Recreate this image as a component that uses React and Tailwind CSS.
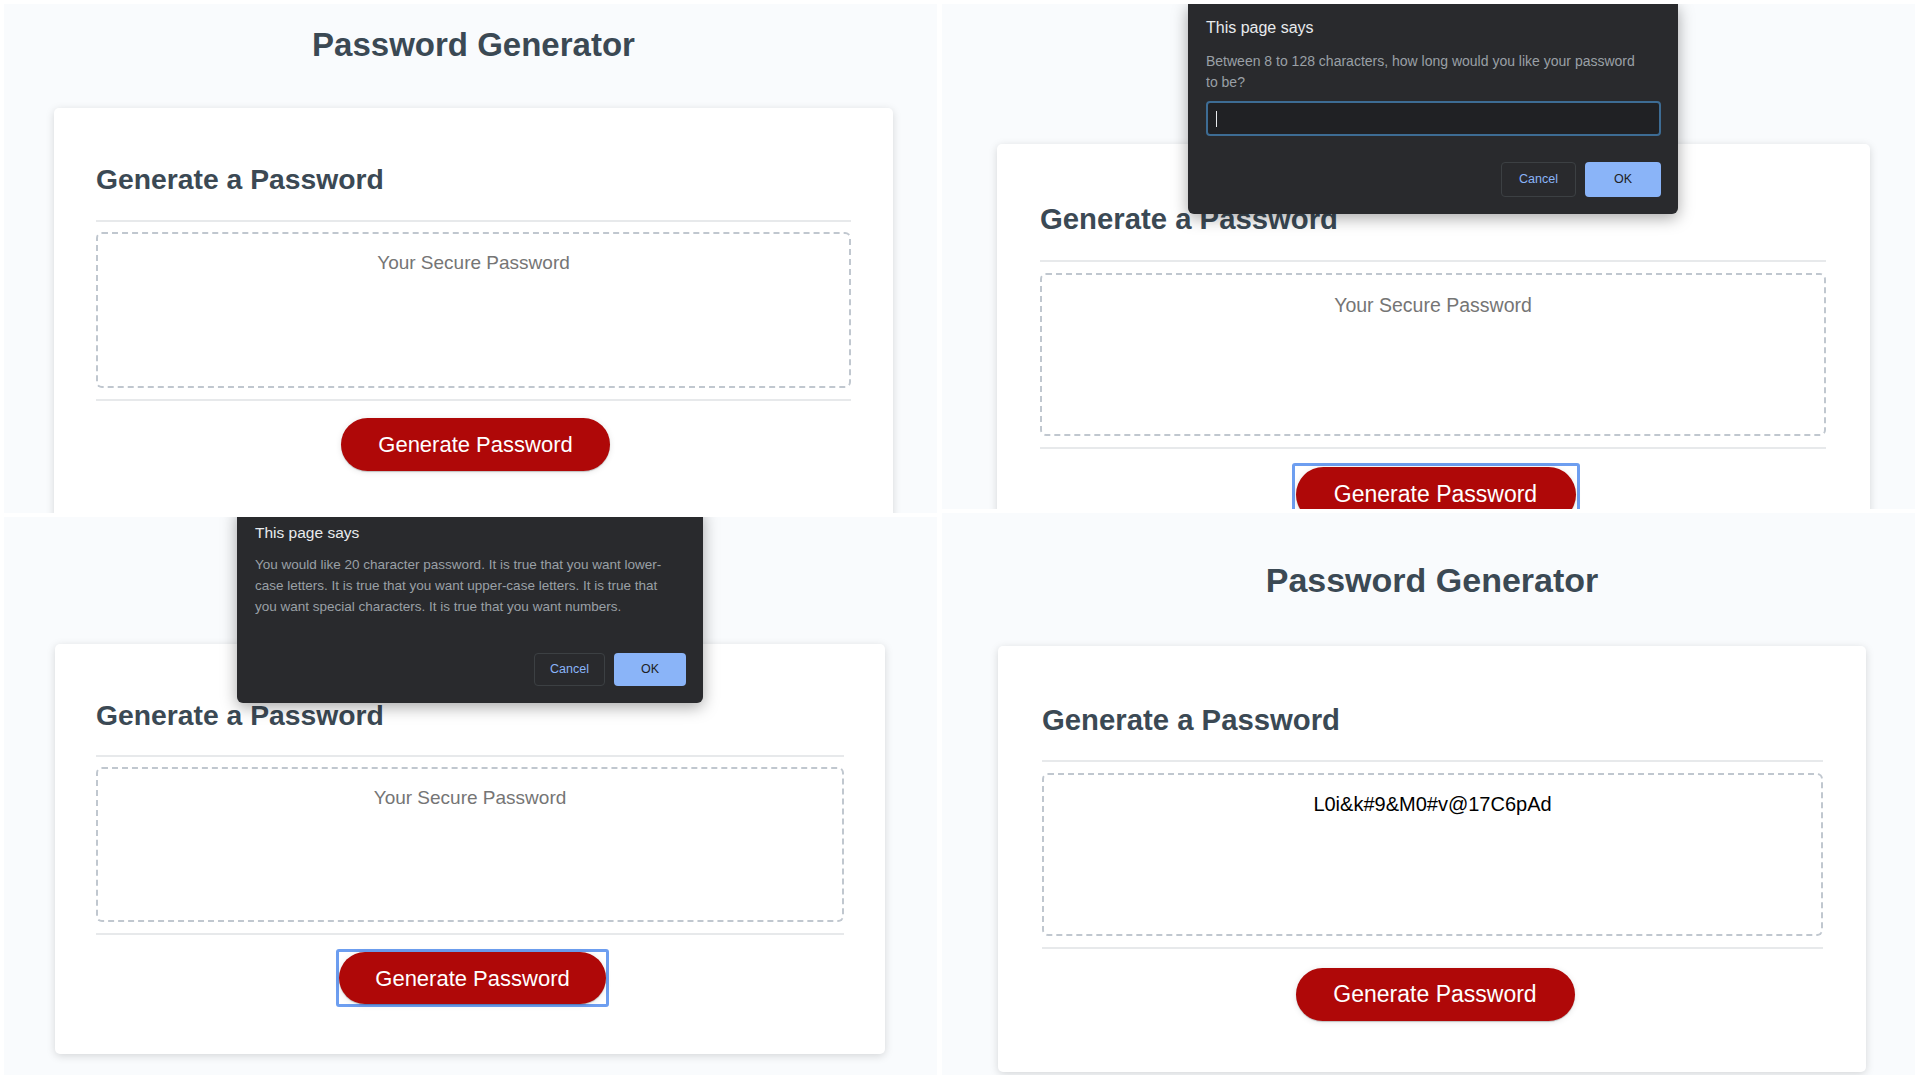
import React from "react";

const FONT = "font-['Liberation_Sans',Arial,Helvetica,sans-serif]";

function Line({ cls }) {
  return <div className={`h-[2px] w-full bg-[#e7e9eb] ${cls}`} />;
}

function GenBtn({ cls }) {
  return (
    <button
      className={`bg-[#af0808] text-white rounded-full shadow-[0_1px_6px_rgba(0,0,0,0.1),0_1px_1px_rgba(0,0,0,0.2)] flex items-center justify-center whitespace-nowrap ${cls}`}
    >
      Generate Password
    </button>
  );
}

function Card({ cardCls, h2Cls, line1Cls, taCls, line2Cls, btnWrapCls, btn, children }) {
  return (
    <div className={`bg-white rounded-[5px] shadow-[0_2px_8px_rgba(0,0,0,0.15)] text-[#3b4954] ${cardCls}`}>
      <h2 className={`font-bold whitespace-nowrap ${h2Cls}`}>Generate a Password</h2>
      <Line cls={line1Cls} />
      <div className={`border-2 border-dashed border-[#c0c7cf] rounded-[6px] text-center ${taCls}`}>{children}</div>
      <Line cls={line2Cls} />
      <div className={`flex justify-center ${btnWrapCls}`}>{btn}</div>
    </div>
  );
}

function DialogButtons({ cancelCls, okCls, rowCls }) {
  return (
    <div className={`flex justify-end gap-[9px] ${rowCls}`}>
      <div className={`border border-[#3c4043] rounded-[4px] text-[#8ab4f8] text-[12.5px] flex items-center justify-center ${cancelCls}`}>
        Cancel
      </div>
      <div className={`bg-[#8ab4f8] rounded-[4px] text-[#202124] text-[12.5px] flex items-center justify-center ${okCls}`}>
        OK
      </div>
    </div>
  );
}

export default function App() {
  return (
    <div className={`w-[1920px] h-[1080px] bg-white flex gap-[5px] pt-[4px] pl-[4px] overflow-hidden ${FONT}`}>
      {/* Left column */}
      <div className="flex flex-col gap-[4px] w-[933px]">
        {/* Top-left */}
        <div className="relative overflow-hidden bg-[#f9fbfd] h-[509px]">
          <div className="ml-[50px] w-[839px] pt-[21px]">
            <h1 className="text-center font-bold text-[33px] leading-[40px] text-[#3b4954]">Password Generator</h1>
            <Card
              cardCls="mt-[43px] pt-[54px] pl-[42px] pr-[42px] pb-[48px]"
              h2Cls="text-[28.3px] leading-[34px]"
              line1Cls="mt-[24px]"
              taCls="mt-[10px] h-[156px] pt-[17px]"
              line2Cls="mt-[11px]"
              btnWrapCls="mt-[17px]"
              btn={<GenBtn cls="ml-[4px] w-[269px] h-[53px] text-[22px]" />}
            >
              <div className="text-[19px] leading-[23px] text-[#757575]">Your Secure Password</div>
            </Card>
          </div>
        </div>

        {/* Bottom-left */}
        <div className="relative overflow-hidden bg-[#f9fbfd] h-[558px]">
          <div className="ml-[51px] w-[830px] pt-[21px]">
            <div className="h-[40px]" />
            <Card
              cardCls="mt-[66px] pt-[54px] pl-[41px] pr-[41px] pb-[47px]"
              h2Cls="text-[28.3px] leading-[34px]"
              line1Cls="mt-[23px]"
              taCls="mt-[10px] h-[155px] pt-[17px]"
              line2Cls="mt-[11px]"
              btnWrapCls="mt-[14px]"
              btn={
                <div className="ml-[5px] border-[3px] border-[#6d9ef0] rounded-[3px]">
                  <GenBtn cls="w-[267px] h-[52px] text-[22px]" />
                </div>
              }
            >
              <div className="text-[19px] leading-[23px] text-[#757575]">Your Secure Password</div>
            </Card>
          </div>

          {/* Alert dialog */}
          <div className="absolute left-[233px] top-[-8px] w-[466px] bg-[#292a2d] rounded-b-[6px] shadow-[0_4px_16px_rgba(0,0,0,0.35)] pt-[14px] pl-[18px] pr-[17px] pb-[17px]">
            <div className="text-[15.5px] leading-[20px] text-[#e8eaed]">This page says</div>
            <div className="mt-[11px] text-[13.5px] leading-[21px] text-[#9aa0a6]">
              <div className="whitespace-nowrap">You would like 20 character password. It is true that you want lower-</div>
              <div className="whitespace-nowrap">case letters. It is true that you want upper-case letters. It is true that</div>
              <div className="whitespace-nowrap">you want special characters. It is true that you want numbers.</div>
            </div>
            <DialogButtons rowCls="mt-[36px]" cancelCls="w-[71px] h-[33px]" okCls="w-[72px] h-[33px]" />
          </div>
        </div>
      </div>

      {/* Right column */}
      <div className="flex flex-col gap-[4px] w-[973px]">
        {/* Top-right */}
        <div className="relative overflow-hidden bg-[#f9fbfd] h-[505px]">
          <div className="ml-[55px] w-[873px] pt-[22px]">
            <div className="h-[42px]" />
            <Card
              cardCls="mt-[76px] pt-[57px] pl-[43px] pr-[44px] pb-[48px]"
              h2Cls="text-[29.3px] leading-[35px]"
              line1Cls="mt-[24px]"
              taCls="mt-[11px] h-[163px] pt-[18px]"
              line2Cls="mt-[11px]"
              btnWrapCls="mt-[14px]"
              btn={
                <div className="ml-[5px] border-[3px] border-[#6d9ef0] rounded-[3px] p-px">
                  <GenBtn cls="w-[280px] h-[55px] text-[23px]" />
                </div>
              }
            >
              <div className="text-[19.5px] leading-[24px] text-[#757575]">Your Secure Password</div>
            </Card>
          </div>

          {/* Prompt dialog */}
          <div className="absolute left-[246px] top-0 w-[490px] bg-[#292a2d] rounded-b-[6px] shadow-[0_4px_16px_rgba(0,0,0,0.35)] pt-[14px] pl-[18px] pr-[17px] pb-[17px]">
            <div className="text-[16px] leading-[20px] text-[#e8eaed]">This page says</div>
            <div className="mt-[13px] text-[14px] leading-[21px] text-[#9aa0a6]">
              <div className="whitespace-nowrap">Between 8 to 128 characters, how long would you like your password</div>
              <div className="whitespace-nowrap">to be?</div>
            </div>
            <div className="mt-[8px] h-[35px] w-full rounded-[4px] border-2 border-[#3d6c94] bg-[#202124] flex items-center">
              <div className="ml-[8px] w-px h-[16px] bg-[#e8eaed]" />
            </div>
            <DialogButtons rowCls="mt-[26px]" cancelCls="w-[75px] h-[35px]" okCls="w-[76px] h-[35px]" />
          </div>
        </div>

        {/* Bottom-right */}
        <div className="relative overflow-hidden bg-[#f9fbfd] h-[562px]">
          <div className="ml-[56px] w-[868px] pt-[46px]">
            <h1 className="text-center font-bold text-[34px] leading-[42px] text-[#3b4954]">Password Generator</h1>
            <Card
              cardCls="mt-[45px] pt-[56px] pl-[44px] pr-[43px] pb-[51px]"
              h2Cls="text-[29.3px] leading-[35px]"
              line1Cls="mt-[23px]"
              taCls="mt-[11px] h-[163px] pt-[17px]"
              line2Cls="mt-[11px]"
              btnWrapCls="mt-[19px]"
              btn={<GenBtn cls="ml-[5px] w-[279px] h-[53px] text-[23px]" />}
            >
              <div className="text-[20px] leading-[24px] text-black">L0i&amp;k#9&amp;M0#v@17C6pAd</div>
            </Card>
          </div>
        </div>
      </div>
    </div>
  );
}
